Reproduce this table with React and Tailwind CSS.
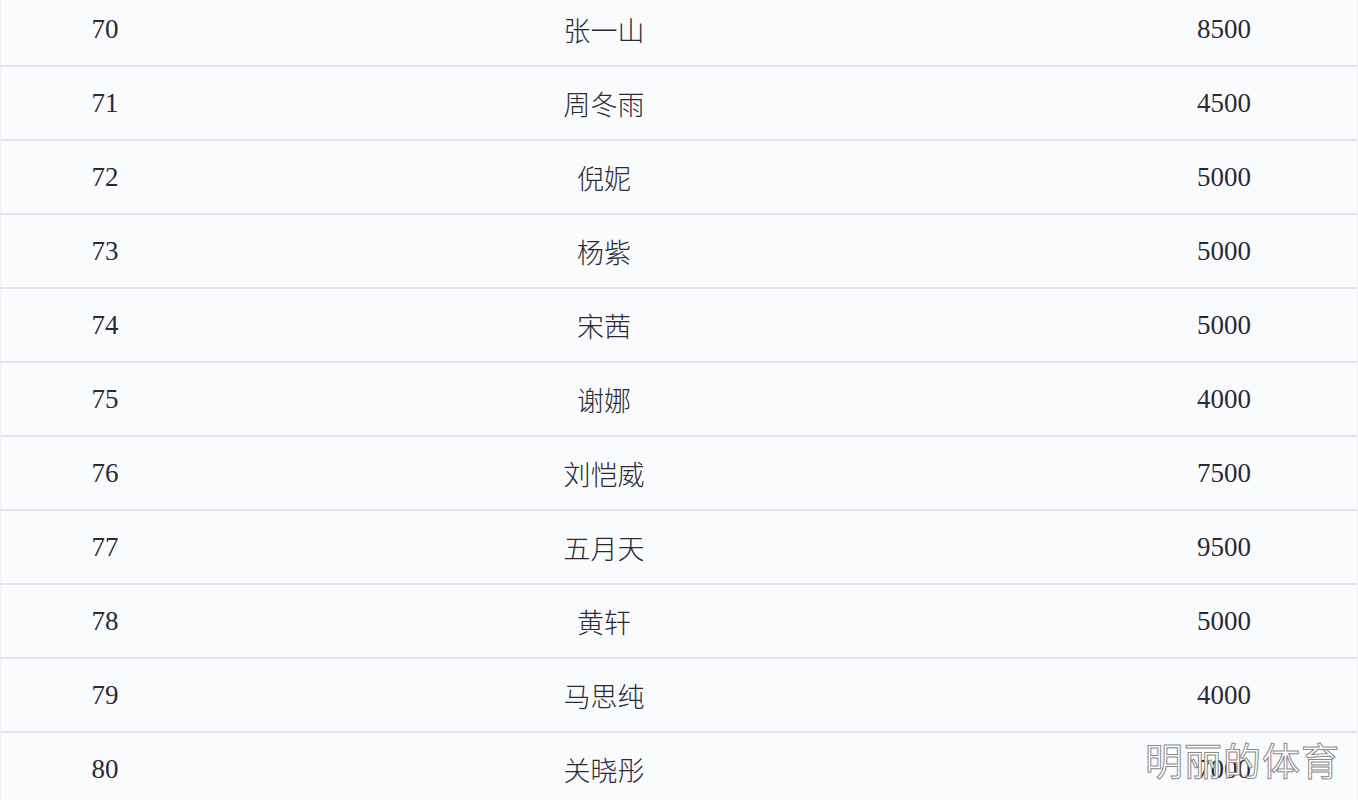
import React from 'react';

const rows = [
  ['70', '张一山', '8500'],
  ['71', '周冬雨', '4500'],
  ['72', '倪妮', '5000'],
  ['73', '杨紫', '5000'],
  ['74', '宋茜', '5000'],
  ['75', '谢娜', '4000'],
  ['76', '刘恺威', '7500'],
  ['77', '五月天', '9500'],
  ['78', '黄轩', '5000'],
  ['79', '马思纯', '4000'],
  ['80', '关晓彤', '7000'],
];

export default function App() {
  return (
    <div className="relative w-[1358px] h-[800px] overflow-hidden bg-[#fafbfd]">
      <div className="-mt-[7px] border-x border-[#eef0f4]">
        {rows.map(([rank, name, price]) => (
          <div key={rank} className="grid grid-cols-[208px_790px_1fr] h-[74px] items-center border-b-2 border-[#e2e5ec] text-[#2b2936] text-[27px] leading-none">
            <div className="text-center font-['Liberation_Serif',serif]">{rank}</div>
            <div className="text-center font-light font-['Noto_Sans_CJK_SC',sans-serif]">{name}</div>
            <div className="text-center pl-[92px] font-['Liberation_Serif',serif]">{price}</div>
          </div>
        ))}
      </div>
      <div className="absolute right-[18px] bottom-[22px] text-[38px] leading-none font-normal text-white [-webkit-text-stroke:1px_#8a8a8a] tracking-[1px] font-['Noto_Sans_CJK_SC',sans-serif]">
        明丽的体育
      </div>
    </div>
  );
}
